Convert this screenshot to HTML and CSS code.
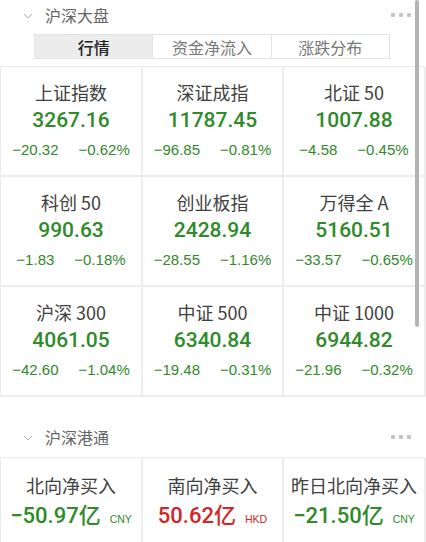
FILE: index.html
```html
<!DOCTYPE html>
<html lang="zh">
<head>
<meta charset="utf-8">
<title>沪深大盘</title>
<link rel="stylesheet" href="styles.css">
</head>
<body>
<div class="page">
  <div class="sec-head">
    <svg class="chev" width="10" height="6" viewBox="0 0 10 6"><path d="M1 1 L5 5 L9 1" fill="none" stroke="#b0b0b0" stroke-width="1"/></svg>
    <span class="sec-title">沪深大盘</span>
    <span class="dots"><i></i><i></i><i></i></span>
  </div>
  <div class="tabs">
    <div class="tab active">行情</div>
    <div class="tab">资金净流入</div>
    <div class="tab">涨跌分布</div>
  </div>
  <div class="grid">
    <div class="cell"><div class="name">上证指数</div><div class="val">3267.16</div><div class="chg"><span>−20.32</span><span>−0.62%</span></div></div>
    <div class="cell"><div class="name">深证成指</div><div class="val">11787.45</div><div class="chg"><span>−96.85</span><span>−0.81%</span></div></div>
    <div class="cell"><div class="name">北证 50</div><div class="val">1007.88</div><div class="chg"><span>−4.58</span><span>−0.45%</span></div></div>
    <div class="cell"><div class="name">科创 50</div><div class="val">990.63</div><div class="chg"><span>−1.83</span><span>−0.18%</span></div></div>
    <div class="cell"><div class="name">创业板指</div><div class="val">2428.94</div><div class="chg"><span>−28.55</span><span>−1.16%</span></div></div>
    <div class="cell"><div class="name">万得全 A</div><div class="val">5160.51</div><div class="chg"><span>−33.57</span><span>−0.65%</span></div></div>
    <div class="cell"><div class="name">沪深 300</div><div class="val">4061.05</div><div class="chg"><span>−42.60</span><span>−1.04%</span></div></div>
    <div class="cell"><div class="name">中证 500</div><div class="val">6340.84</div><div class="chg"><span>−19.48</span><span>−0.31%</span></div></div>
    <div class="cell"><div class="name">中证 1000</div><div class="val">6944.82</div><div class="chg"><span>−21.96</span><span>−0.32%</span></div></div>
  </div>

  <div class="sec-head sec2">
    <svg class="chev" width="10" height="6" viewBox="0 0 10 6"><path d="M1 1 L5 5 L9 1" fill="none" stroke="#b0b0b0" stroke-width="1"/></svg>
    <span class="sec-title">沪深港通</span>
    <span class="dots"><i></i><i></i><i></i></span>
  </div>
  <div class="grid grid2">
    <div class="cell cell2"><div class="name">北向净买入</div><div class="val green">−50.97亿<small>CNY</small></div></div>
    <div class="cell cell2"><div class="name">南向净买入</div><div class="val red">50.62亿<small>HKD</small></div></div>
    <div class="cell cell2"><div class="name">昨日北向净买入</div><div class="val green">−21.50亿<small>CNY</small></div></div>
  </div>
  <div class="scrollbar"></div>
</div>
</body>
</html>
```
FILE: styles.css
```css
* { box-sizing: border-box; }
html, body { margin: 0; padding: 0; background: #fff; }
body {
  font-family: "Liberation Sans", "Noto Sans CJK SC", sans-serif;
  color: #333;
  width: 426px;
  overflow: hidden;
}
.page { position: relative; width: 426px; }

.sec-head {
  height: 30px;
  display: flex;
  align-items: center;
  padding-left: 23px;
  position: relative;
}
.chev { display: block; margin-right: 12px; margin-top: 1px; }
.sec-title {
  font-family: "Noto Sans CJK SC", sans-serif;
  font-size: 16px;
  color: #666;
}
.dots {
  margin-left: auto;
  margin-right: 15px;
  display: flex;
  gap: 4px;
}
.dots i {
  display: block;
  width: 4px;
  height: 4px;
  background: #c4c4c4;
  border-radius: 1px;
}

.tabs {
  margin: 4px 0 0 34px;
  width: 356px;
  height: 25px;
  display: flex;
  border: 1px solid #e4e4e4;
}
.tab {
  flex: 1;
  display: flex;
  align-items: center;
  justify-content: center;
  font-family: "Noto Sans CJK SC", sans-serif;
  font-size: 16px;
  color: #777;
  border-left: 1px solid #e4e4e4;
}
.tab:first-child { border-left: none; }
.tab.active { background: #ececec; color: #222; font-weight: 500; }

.grid {
  margin-top: 7px;
  width: 425px;
  display: grid;
  grid-template-columns: 142px 141px 142px;
  border-top: 1px solid #ebebeb;
  border-left: 1px solid #ebebeb;
}
.cell {
  height: 110px;
  border-right: 2px solid #ededed;
  border-bottom: 2px solid #ededed;
  display: flex;
  flex-direction: column;
  align-items: center;
}
.name {
  font-family: "Noto Sans CJK SC", sans-serif;
  font-size: 18px;
  line-height: 24px;
  margin-top: 13px;
  color: #404040;
}
.val {
  font-family: "Roboto", "Noto Sans CJK SC", sans-serif;
  font-weight: 500;
  font-size: 21px;
  line-height: 28px;
  margin-top: 2px;
  color: #2f8a2a;
}
.chg {
  margin-top: 6px;
  font-size: 15px;
  line-height: 20px;
  color: #2f8a2a;
  display: flex;
  gap: 20px;
}

.sec2 { margin-top: 20px; height: 40px; }
.grid2 { margin-top: 0; }
.cell2 { height: 90px; }
.cell2 .name { margin-top: 15px; }
.cell2 .val { margin-top: 5px; display: flex; align-items: baseline; font-size: 22px; }
.val.green { color: #2f8a2a; }
.val.red { color: #d0262a; }
.val small {
  font-family: "Liberation Sans", sans-serif;
  font-weight: 400;
  font-size: 10.5px;
  margin-left: 9px;
}

.scrollbar {
  position: absolute;
  top: 0;
  left: 415px;
  width: 4px;
  height: 327px;
  background: #b3b3b3;
  border-radius: 2px;
}
```
